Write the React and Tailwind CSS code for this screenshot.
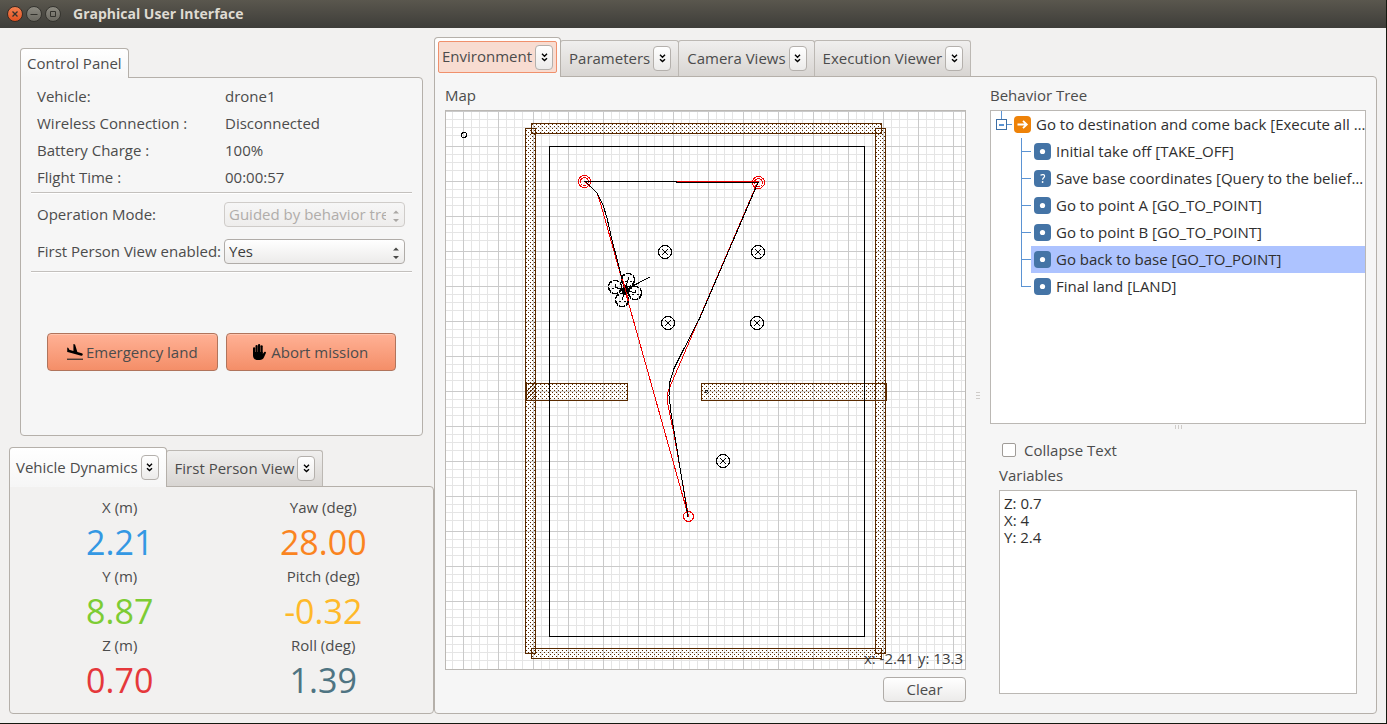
import { useId } from 'react';

const STATUS = [
  ['Vehicle:', 'drone1'],
  ['Wireless Connection :', 'Disconnected'],
  ['Battery Charge :', '100%'],
  ['Flight Time :', '00:00:57'],
];

const DYNAMICS = [
  ['X (m)', '2.21', 'text-[#3498e3]'],
  ['Yaw (deg)', '28.00', 'text-[#fa841f]'],
  ['Y (m)', '8.87', 'text-[#7dcc34]'],
  ['Pitch (deg)', '-0.32', 'text-[#ffb929]'],
  ['Z (m)', '0.70', 'text-[#e5383b]'],
  ['Roll (deg)', '1.39', 'text-[#4f7482]'],
];

const TASKS = [
  ['Initial take off [TAKE_OFF]', 'dot'],
  ['Save base coordinates [Query to the belief…', 'query'],
  ['Go to point A [GO_TO_POINT]', 'dot'],
  ['Go to point B [GO_TO_POINT]', 'dot'],
  ['Go back to base [GO_TO_POINT]', 'dot'],
  ['Final land [LAND]', 'dot'],
];
const ACTIVE_TASK = 4;

const WALLS = [
  [531, 123, 350, 10],
  [525, 128, 10, 525],
  [875, 128, 10, 525],
  [531, 648, 350, 10],
  [526, 383, 101, 17],
  [701, 383, 185, 17],
];

const POLES = [
  [665, 252],
  [758, 252],
  [668, 323],
  [757, 323],
  [723, 461],
];

const ROTORS = [
  [628, 280],
  [615, 287],
  [635, 293],
  [622, 300],
];

function WindowButton({ label, close, children }) {
  return (
    <button
      type="button"
      aria-label={label}
      className={
        close
          ? 'grid size-4 place-items-center rounded-full border border-[#3a2a22] bg-linear-to-b from-[#f2804f] to-[#e2511f]'
          : 'grid size-4 place-items-center rounded-full border border-[#35342f] bg-linear-to-b from-[#8c8a81] to-[#6b6961]'
      }
    >
      <svg viewBox="0 0 14 14" className="size-3.5 fill-none stroke-[#33322d]">
        {children}
      </svg>
    </button>
  );
}

function Tab({ children, selected, focused }) {
  const shell = selected
    ? 'relative z-10 -mb-px flex rounded-t-[4px] border border-b-0 border-[#b5b0aa] bg-linear-to-b from-white to-[#f6f6f6]'
    : 'mt-[3px] -ml-px flex items-center rounded-t-[3px] border border-b-0 border-[#bcb8b3] bg-linear-to-b from-[#f0efee] to-[#d8d5d2] pr-[7px] pl-2';
  const inner = selected
    ? focused
      ? 'm-[3px] flex h-8 items-center rounded-[2px] border border-[#f0906c] bg-[#f8dcd1] px-[3px]'
      : 'flex items-center pr-[7px] pl-1.5'
    : 'flex items-center';
  return (
    <div className={shell}>
      <div className={inner}>
        <button type="button" role="tab" aria-selected={!!selected} className="pb-0.5 whitespace-nowrap">
          {children}
        </button>
        <button
          type="button"
          aria-label={`Detach ${children}`}
          className="ml-[3px] grid h-[25px] w-[18px] place-items-center rounded-[4px] border border-[#b4b0ac] bg-linear-to-b from-white to-[#ecebea]"
        >
          <svg viewBox="0 0 7 9" className="h-[9px] w-[7px] fill-none stroke-black stroke-[1.4]">
            <path d="M1 .8 3.5 3.2 6 .8M1 5.2 3.5 7.6 6 5.2" />
          </svg>
        </button>
      </div>
    </div>
  );
}

function Select({ id, disabled, value, options }) {
  return (
    <div className="relative">
      <select
        id={id}
        disabled={disabled}
        defaultValue={value}
        className="block h-[25px] w-full appearance-none rounded-[4px] border border-[#b0aca8] bg-linear-to-b from-white to-[#ecebea] pr-[18px] pb-px pl-1 text-[#3c3c3c] disabled:border-[#cfccc9] disabled:from-[#f6f6f6] disabled:to-[#eeedec] disabled:text-[#b0adaa] disabled:opacity-100"
      >
        {options.map((o) => (
          <option key={o}>{o}</option>
        ))}
      </select>
      <svg
        viewBox="0 0 6 12"
        className={
          disabled
            ? 'pointer-events-none absolute top-2 right-1.5 h-3 w-1.5 fill-[#aaa7a4]'
            : 'pointer-events-none absolute top-2 right-1.5 h-3 w-1.5 fill-[#4a4a48]'
        }
      >
        <path d="M0 3.5 3 .5 6 3.5zM0 9 3 12 6 9z" />
      </svg>
    </div>
  );
}

function Separator() {
  return <div className="mx-[10px] h-0.5 border-t border-b border-t-[#c3c0bd] border-b-white" />;
}

function LandIcon() {
  return (
    <svg viewBox="2.5 2 19 19" className="size-4 shrink-0" aria-hidden="true">
      <path d="M2.500 19.300h19v1.700h-19z" fill="#4a3a34" />
      <path d="M9.680 13.270l4.350 1.160 5.310 1.420c.8.210 1.620-.26 1.840-1.060.21-.8-.26-1.620-1.060-1.840l-5.310-1.420-2.760-9.020L10.120 2v8.280L5.150 8.950l-.93-2.320-1.450-.39v5.170l1.600.43 5.310 1.430z" />
    </svg>
  );
}

function HandIcon() {
  return (
    <svg viewBox="0 0 13 16" className="h-4 w-[13px] shrink-0" aria-hidden="true">
      <rect x="0" y="3.200" width="2.200" height="8" rx="1.100" />
      <rect x="2.500" y="1" width="2.200" height="9" rx="1.100" />
      <rect x="5" y="0" width="2.200" height="9" rx="1.100" />
      <rect x="7.500" y="1.200" width="2.200" height="9" rx="1.100" />
      <path d="M0 8h9.700v2l1.600-2c.8-.8 2-.1 1.600.9L11 13.200C10.200 15 8.800 16 6.800 16H4.600C1.800 16 0 14.200 0 11.500z" />
    </svg>
  );
}

function FlightMap() {
  const grid = useId();
  const brick = useId();
  return (
    <svg
      viewBox="446 111 519 558"
      className="block w-full bg-white"
      shapeRendering="crispEdges"
      role="img"
      aria-label="Flight map"
    >
      <defs>
        <pattern id={grid} x="463" y="111" width="35" height="35" patternUnits="userSpaceOnUse">
          <path
            d="M8.5 0v35M16.5 0v35M24.5 0v35M0 8.5h35M0 16.5h35M0 24.5h35"
            stroke="#e5e5e5"
            fill="none"
          />
          <path d="M.5 0v35M0 .5h35" stroke="#cacaca" fill="none" />
        </pattern>
        <pattern id={brick} width="4" height="4" patternUnits="userSpaceOnUse">
          <path d="M0 0h1v1H0zM2 2h1v1H2z" fill="#5a2a00" />
        </pattern>
      </defs>
      <rect x="446" y="111" width="519" height="558" fill={`url(#${grid})`} />
      {WALLS.map(([x, y, w, h]) => (
        <rect
          key={`${x}-${y}`}
          x={x + 0.5}
          y={y + 0.5}
          width={w}
          height={h}
          fill={`url(#${brick})`}
          stroke="#5a2a00"
        />
      ))}
      <path d="M526 392l9-9M526 396l9-9M526 400l9-9M531 400l4-4" stroke="#5a2a00" />
      <rect x="549.5" y="146.5" width="315" height="490" fill="none" stroke="#000" />
      <g fill="none" stroke="#000">
        <circle cx="464" cy="135" r="2.5" />
        <circle cx="706.5" cy="391.5" r="1.5" strokeWidth=".7" />
        {POLES.map(([x, y]) => (
          <g key={`${x}-${y}`}>
            <circle cx={x} cy={y} r="6.5" />
            <path d={`M${x - 3} ${y - 3}l6 6m0-6l-6 6`} />
          </g>
        ))}
      </g>
      <g fill="none" stroke="#f00000">
        <circle cx="584.5" cy="181.5" r="6" />
        <circle cx="584.5" cy="181.5" r="4" />
        <circle cx="758.5" cy="182.5" r="6" />
        <circle cx="758.5" cy="182.5" r="4" />
        <circle cx="688.5" cy="516.5" r="5" />
        <path d="M676 181.500h82L669 389l-1.500 5v9L674 434l14.500 82.500L601 205l-4-12-12-11.500" />
      </g>
      <g fill="none" stroke="#000">
        <path d="M584 181.500h92v1h82l-18 42-40 93-18 35-8 16-4 13-1 14 2 17 17 104" />
        <path d="M586 182l11 11 6 12 4 13 5 22 5 19 8 31" />
        <path d="M625 290l25-13" />
        {ROTORS.map(([x, y]) => (
          <g key={`${x}-${y}`}>
            <circle cx={x} cy={y} r="6.5" strokeWidth="1.400" strokeDasharray="6 1" />
            <path d={`M625 290L${x} ${y}`} />
            <path d={`M${x - 3} ${y + 1}h2m1-4v3m2 1h2`} />
          </g>
        ))}
      </g>
      <circle cx="625.500" cy="290.500" r="4" fill="#000" />
      <path d="M622.500 279l6 22" stroke="#f00000" fill="none" />
    </svg>
  );
}

function TaskIcon({ kind }) {
  return (
    <svg viewBox="0 0 17 17" className="size-[17px] shrink-0">
      <rect width="17" height="17" rx="4" fill={kind === 'sequence' ? '#ee8208' : '#4474a6'} />
      {kind === 'sequence' && (
        <path d="M3.500 8.500h9M9 4.800l3.800 3.700L9 12.200" fill="none" stroke="#fff" strokeWidth="1.800" />
      )}
      {kind === 'dot' && <circle cx="8.500" cy="8.500" r="2.600" fill="#fff" />}
      {kind === 'query' && (
        <>
          <path d="M6.500 5.200c2-1.200 4.300-.6 4.100 1.100-.2 1.500-2 1.600-2 3.400" fill="none" stroke="#fff" strokeWidth="1.200" />
          <circle cx="8.600" cy="12" r=".9" fill="#fff" />
        </>
      )}
    </svg>
  );
}

function BehaviorTree() {
  return (
    <ul role="tree" aria-label="Behavior Tree" className="h-[314px] overflow-hidden border border-[#bbb8b4] bg-white text-[#2f2f2f]">
      <li role="treeitem" aria-expanded="true">
        <div className="flex h-[27px] items-center pl-[5px]">
          <svg viewBox="0 0 18 27" className="h-[27px] w-[18px] shrink-0 fill-none stroke-[#5b93d3]" shapeRendering="crispEdges">
            <path d="M5.500 0v8M11 13.500h5" />
            <rect x=".5" y="8.500" width="10" height="10" stroke="#3d6fa5" />
            <path d="M3 13.500h5" strokeWidth="2" />
          </svg>
          <TaskIcon kind="sequence" />
          <span className="ml-[5px] pb-0.5 whitespace-nowrap">Go to destination and come back [Execute all …</span>
        </div>
        <ul role="group">
          {TASKS.map(([name, kind], i) => (
            <li key={name} role="treeitem" aria-selected={i === ACTIVE_TASK} className="flex h-[27px] pl-[30px]">
              <svg viewBox="0 0 10 27" className="h-[27px] w-2.5 shrink-0 fill-none stroke-[#5b93d3]" shapeRendering="crispEdges">
                <path d={i === TASKS.length - 1 ? 'M.5 0v13.500h9' : 'M.5 0v27M.5 13.500h9'} />
              </svg>
              <div
                className={
                  i === ACTIVE_TASK
                    ? 'flex min-w-0 flex-1 items-center bg-[#adc3ff] pl-[3px]'
                    : 'flex min-w-0 flex-1 items-center pl-[3px]'
                }
              >
                <TaskIcon kind={kind} />
                <span className="ml-[5px] pb-0.5 whitespace-nowrap">{name}</span>
              </div>
            </li>
          ))}
        </ul>
      </li>
    </ul>
  );
}

const actionButton =
  'flex h-[38px] flex-1 items-center justify-center rounded-[4px] border border-[#b0745c] bg-linear-to-b from-[#ffb195] to-[#f48e68] whitespace-nowrap shadow-[inset_0_1px_0_#ffc4ae]';

export default function App() {
  return (
    <div className="flex min-h-screen flex-col border-r border-b border-[#15180f] bg-[#f2f1f0] font-['Open_Sans','Noto_Sans',sans-serif] text-[15px] leading-5 text-[#4c4c4c]">
      <header className="flex h-7 items-center gap-[3px] bg-linear-to-b from-[#5a574e] to-[#3e3d39] pl-[7px]">
        <WindowButton label="Close" close>
          <path d="M4.500 4.500l5 5m0-5l-5 5" strokeWidth="1.300" />
        </WindowButton>
        <WindowButton label="Minimize">
          <path d="M3.500 7.500h7" />
        </WindowButton>
        <WindowButton label="Maximize">
          <path d="M4.500 4.500h5v5h-5z" />
        </WindowButton>
        <h1 className="ml-[9px] text-[14px] font-bold text-[#dfdbd2]">Graphical User Interface</h1>
      </header>

      <main className="flex flex-1 items-stretch pr-[9px] pb-[9px] pl-[9px]">
        <div className="flex w-[425px] shrink-0 flex-col pt-5">
          <section className="mr-[11px] ml-[11px] flex flex-col">
            <div className="flex">
              <h2 className="relative z-10 -mb-px h-[30px] rounded-t-[4px] border border-b-0 border-[#b5b0aa] bg-linear-to-b from-white to-[#f6f6f6] px-1.5 pt-1">
                Control Panel
              </h2>
            </div>
            <div className="h-[359px] rounded-[4px] rounded-tl-none border border-[#b5b0aa] bg-[#f6f6f6] pt-[5px]">
              <dl className="mb-px grid grid-cols-[188px_1fr] pl-4 leading-[27px]">
                {STATUS.map(([label, value]) => (
                  <div key={label} className="contents">
                    <dt>{label}</dt>
                    <dd>{value}</dd>
                  </div>
                ))}
              </dl>
              <Separator />
              <div className="mt-2 mb-[7px] grid grid-cols-[184px_1fr] items-center gap-x-[3px] gap-y-3 pr-[17px] pl-4">
                <label htmlFor="mode" className="pb-0.5 whitespace-nowrap">Operation Mode:</label>
                <Select id="mode" disabled value="Guided by behavior trees" options={['Guided by behavior trees', 'Keyboard']} />
                <label htmlFor="fpv" className="pb-0.5 whitespace-nowrap">First Person View enabled:</label>
                <Select id="fpv" value="Yes" options={['Yes', 'No']} />
              </div>
              <Separator />
              <div className="mt-[60px] flex gap-2 px-[26px]">
                <button type="button" className={`${actionButton} gap-[3px]`}>
                  <LandIcon />
                  Emergency land
                </button>
                <button type="button" className={`${actionButton} gap-[5px]`}>
                  <HandIcon />
                  Abort mission
                </button>
              </div>
            </div>
          </section>

          <section className="mt-[11px] flex flex-1 flex-col">
            <div role="tablist" className="flex h-[39px] items-stretch">
              <Tab selected>Vehicle Dynamics</Tab>
              <Tab>First Person View</Tab>
            </div>
            <div className="grid flex-1 grid-cols-2 content-start rounded-[4px] rounded-tl-none border border-[#b5b0aa] px-2 pt-[9px]">
              {DYNAMICS.map(([label, value, color]) => (
                <div key={label} className="flex h-[69px] flex-col items-center gap-0.5">
                  <span className="leading-[22px]">{label}</span>
                  <span className={`text-[34px] leading-[45px] ${color}`}>{value}</span>
                </div>
              ))}
            </div>
          </section>
        </div>

        <section className="flex min-w-0 flex-1 flex-col pt-[9px]">
          <div role="tablist" className="flex h-[39px] items-stretch">
            <Tab selected focused>Environment</Tab>
            <Tab>Parameters</Tab>
            <Tab>Camera Views</Tab>
            <Tab>Execution Viewer</Tab>
          </div>
          <div className="grid flex-1 grid-cols-[521fr_24px_376fr] rounded-[4px] rounded-tl-none border border-[#b5b0aa] bg-[#f6f6f6] px-2.5 pt-2">
            <div className="min-w-0">
              <h3 className="mb-[5px]">Map</h3>
              <div className="relative border border-[#bbb8b4]">
                <FlightMap />
                <span className="absolute right-0.5 bottom-px text-[#3c3c3c]">x: -2.41 y: 13.3</span>
              </div>
              <div className="mt-[7px] flex justify-end">
                <button
                  type="button"
                  className="h-[25px] w-[83px] rounded-[4px] border border-[#b0aca8] bg-linear-to-b from-white to-[#ecebea] pb-0.5"
                >
                  Clear
                </button>
              </div>
            </div>
            <div className="flex items-center justify-center pb-2">
              <div className="flex flex-col gap-0.5">
                <i className="h-px w-1 bg-[#cfccc9]" />
                <i className="h-px w-1 bg-[#cfccc9]" />
                <i className="h-px w-1 bg-[#cfccc9]" />
              </div>
            </div>
            <div className="flex min-w-0 flex-col">
              <h3 className="mb-[5px]">Behavior Tree</h3>
              <BehaviorTree />
              <div className="flex h-1.5 items-center justify-center gap-0.5">
                <i className="h-1 w-px bg-[#cfccc9]" />
                <i className="h-1 w-px bg-[#cfccc9]" />
                <i className="h-1 w-px bg-[#cfccc9]" />
              </div>
              <div className="flex flex-1 flex-col px-[9px] pt-2.5 pb-[19px]">
                <label className="flex items-center gap-2 pl-[3px]">
                  <input
                    type="checkbox"
                    className="size-3.5 appearance-none rounded-[2px] border border-[#a09c98] bg-white checked:bg-[#f0906c]"
                  />
                  Collapse Text
                </label>
                <label htmlFor="variables" className="my-[5px]">Variables</label>
                <textarea
                  id="variables"
                  readOnly
                  defaultValue={'Z: 0.7\nX: 4\nY: 2.4'}
                  className="flex-1 resize-none border border-[#bbb8b4] bg-white px-1 py-1 leading-[17px] text-[#2f2f2f]"
                />
              </div>
            </div>
          </div>
        </section>
      </main>
    </div>
  );
}
